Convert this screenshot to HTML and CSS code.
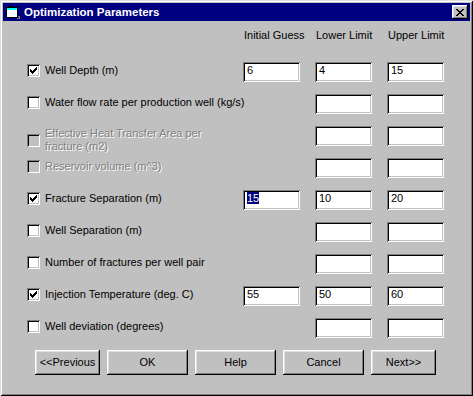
FILE: index.html
```html
<!DOCTYPE html>
<html>
<head>
<meta charset="utf-8">
<title>Optimization Parameters</title>
<link rel="stylesheet" href="styles.css">
</head>
<body>
<div class="window">
  <div class="titlebar">
    <svg class="app-icon" width="16" height="16" viewBox="0 0 16 16" shape-rendering="crispEdges">
      <path d="M1 3h12v11h-12z" fill="#000"/>
      <path d="M2 4h10v2h-10z" fill="#00ffff"/>
      <path d="M2 6h10v7h-10z" fill="#fff"/>
      <path d="M3 2h5v1h-5z" fill="#000"/>
      <path d="M13 12h2v1h-2zM14 13h1v2h-1zM12 14h2v1h-2z" fill="#808080"/>
    </svg>
    <span class="title">Optimization Parameters</span>
    <div class="close-btn">
      <svg width="8" height="7" viewBox="0 0 8 7" shape-rendering="crispEdges">
        <path d="M0 0h2v1h-2zM6 0h2v1h-2zM1 1h2v1h-2zM5 1h2v1h-2zM2 2h4v1h-4zM3 3h2v1h-2zM2 4h4v1h-4zM1 5h2v1h-2zM5 5h2v1h-2zM0 6h2v1h-2zM6 6h2v1h-2z" fill="#000"/>
      </svg>
    </div>
  </div>
  <div class="body">
    <div class="grid">
      <div></div>
      <div class="colhead">Initial Guess</div>
      <div class="colhead">Lower Limit</div>
      <div class="colhead">Upper Limit</div>

      <div class="check"><span class="box checked"><svg width="7" height="7" viewBox="0 0 7 7" shape-rendering="crispEdges"><path d="M6 0h1v1h-1zM5 1h2v1h-2zM0 2h1v1h-1zM4 2h3v1h-3zM0 3h2v1h-2zM3 3h3v1h-3zM0 4h5v1h-5zM1 5h3v1h-3zM2 6h1v1h-1z"/></svg></span><span class="label">Well Depth (m)</span></div>
      <div class="field">6</div>
      <div class="field">4</div>
      <div class="field">15</div>

      <div class="check"><span class="box"></span><span class="label">Water flow rate per production well (kg/s)</span></div>
      <div></div>
      <div class="field"></div>
      <div class="field"></div>

      <div class="check tall disabled"><span class="box"></span><span class="label">Effective Heat Transfer Area per<br>fracture (m2)</span></div>
      <div></div>
      <div class="field"></div>
      <div class="field"></div>

      <div class="check disabled"><span class="box"></span><span class="label">Reservoir volume (m^3)</span></div>
      <div></div>
      <div class="field"></div>
      <div class="field"></div>

      <div class="check"><span class="box checked"><svg width="7" height="7" viewBox="0 0 7 7" shape-rendering="crispEdges"><path d="M6 0h1v1h-1zM5 1h2v1h-2zM0 2h1v1h-1zM4 2h3v1h-3zM0 3h2v1h-2zM3 3h3v1h-3zM0 4h5v1h-5zM1 5h3v1h-3zM2 6h1v1h-1z"/></svg></span><span class="label">Fracture Separation (m)</span></div>
      <div class="field"><span class="sel">15</span></div>
      <div class="field">10</div>
      <div class="field">20</div>

      <div class="check"><span class="box"></span><span class="label">Well Separation (m)</span></div>
      <div></div>
      <div class="field"></div>
      <div class="field"></div>

      <div class="check"><span class="box"></span><span class="label">Number of fractures per well pair</span></div>
      <div></div>
      <div class="field"></div>
      <div class="field"></div>

      <div class="check"><span class="box checked"><svg width="7" height="7" viewBox="0 0 7 7" shape-rendering="crispEdges"><path d="M6 0h1v1h-1zM5 1h2v1h-2zM0 2h1v1h-1zM4 2h3v1h-3zM0 3h2v1h-2zM3 3h3v1h-3zM0 4h5v1h-5zM1 5h3v1h-3zM2 6h1v1h-1z"/></svg></span><span class="label">Injection Temperature (deg. C)</span></div>
      <div class="field">55</div>
      <div class="field">50</div>
      <div class="field">60</div>

      <div class="check"><span class="box"></span><span class="label">Well deviation (degrees)</span></div>
      <div></div>
      <div class="field"></div>
      <div class="field"></div>
    </div>
    <div class="buttons">
      <div class="btn narrow">&lt;&lt;Previous</div>
      <div class="btn">OK</div>
      <div class="btn">Help</div>
      <div class="btn">Cancel</div>
      <div class="btn narrow">Next&gt;&gt;</div>
    </div>
  </div>
</div>
</body>
</html>
```
FILE: styles.css
```css
* { box-sizing: border-box; }
html, body {
  margin: 0;
  padding: 0;
  background: #c0c0c0;
}
body {
  font-family: "Liberation Sans", Arial, sans-serif;
  font-size: 11px;
  line-height: 13px;
  color: #000;
}
.window {
  width: 473px;
  height: 396px;
  background: #c0c0c0;
  padding: 3px;
  box-shadow: inset 1px 1px #dfdfdf, inset -1px -1px #000, inset 2px 2px #fff, inset -2px -2px #808080;
  display: flex;
  flex-direction: column;
}
.titlebar {
  height: 18px;
  background: #000080;
  display: flex;
  align-items: center;
  color: #fff;
}
.app-icon {
  margin-left: 2px;
  flex: none;
}
.title {
  margin-left: 3px;
  font-weight: bold;
  font-size: 11.5px;
}
.close-btn {
  margin-left: auto;
  margin-right: 2px;
  width: 16px;
  height: 14px;
  background: #c0c0c0;
  box-shadow: inset -1px -1px #000, inset 1px 1px #fff, inset -2px -2px #808080, inset 2px 2px #dfdfdf;
  display: flex;
  align-items: center;
  justify-content: center;
  padding-right: 1px;
}
.close-btn svg { display: block; }
.body {
  padding: 8px 0 0 24px;
}
.grid {
  display: grid;
  grid-template-columns: 201px 57px 57px 57px;
  grid-template-rows: 21px repeat(9, 20px);
  column-gap: 15px;
  row-gap: 12px;
}
.colhead {
  padding-left: 1px;
  white-space: nowrap;
}
.check {
  display: flex;
  align-items: center;
  align-self: start;
  margin-top: 2px;
  white-space: nowrap;
}
.check.tall {
  margin-top: 1px;
}
.box {
  width: 13px;
  height: 13px;
  flex: none;
  background: #fff;
  box-shadow: inset 1px 1px #808080, inset -1px -1px #fff, inset 2px 2px #000, inset -2px -2px #c0c0c0;
  padding: 3px;
  display: flex;
}
.box svg { display: block; }
.label {
  margin-left: 5px;
  line-height: 13px;
}
.disabled .box {
  background: #c0c0c0;
}
.disabled .label {
  color: #808080;
  text-shadow: 1px 1px 0 #fff;
}
.field {
  background: #fff;
  height: 20px;
  padding: 2px 3px 0 4px;
  box-shadow: inset 1px 1px #808080, inset -1px -1px #fff, inset 2px 2px #000, inset -2px -2px #c0c0c0;
  white-space: nowrap;
}
.sel {
  background: #000080;
  color: #fff;
}
.buttons {
  display: flex;
  gap: 7px;
  margin-top: 12px;
  padding-left: 8px;
}
.btn {
  width: 81px;
  height: 25px;
  background: #c0c0c0;
  box-shadow: inset -1px -1px #000, inset 1px 1px #fff, inset -2px -2px #808080, inset 2px 2px #dfdfdf;
  display: flex;
  align-items: center;
  justify-content: center;
}
.btn.narrow {
  width: 65px;
}
```
